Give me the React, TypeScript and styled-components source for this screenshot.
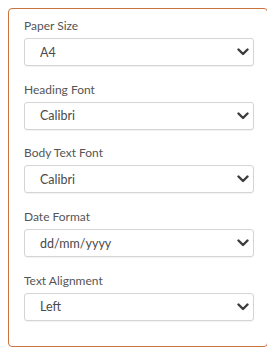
import React from 'react';
import { styled, createGlobalStyle } from 'styled-components';

const GlobalStyle = createGlobalStyle`
  body {
    margin: 8px;
    background: #fff;
    font-family: Lato, 'Open Sans', sans-serif;
  }
`;

interface FieldProps {
  label: string;
  value: string;
}

const fields: FieldProps[] = [
  { label: 'Paper Size', value: 'A4' },
  { label: 'Heading Font', value: 'Calibri' },
  { label: 'Body Text Font', value: 'Calibri' },
  { label: 'Date Format', value: 'dd/mm/yyyy' },
  { label: 'Text Alignment', value: 'Left' },
];

const Chevron = () => (
  <svg width="12" height="8" viewBox="0 0 12 8" aria-hidden="true">
    <path d="M1.5 1.5 L6 6 L10.5 1.5" fill="none" stroke="#3d3d3d" strokeWidth="2.4" strokeLinecap="round" strokeLinejoin="round" />
  </svg>
);

const Field = ({ label, value }: FieldProps) => (
  <Styled.Field>
    <Styled.Label>{label}</Styled.Label>
    <Styled.Select>
      <Styled.Value>{value}</Styled.Value>
      <Chevron />
    </Styled.Select>
  </Styled.Field>
);

export default function App() {
  return (
    <>
      <GlobalStyle />
      <Styled.Panel>
        {fields.map((f) => (
          <Field key={f.label} {...f} />
        ))}
      </Styled.Panel>
    </>
  );
}

const Styled = {
  Panel: styled.div`
    box-sizing: border-box;
    width: 260px;
    height: 339px;
    padding: 9px 13px 0 15px;
    border: 1.5px solid #c9733f;
    border-radius: 4px;
    display: flex;
    flex-direction: column;
    gap: 15.7px;
  `,
  Field: styled.div`
    display: flex;
    flex-direction: column;
    gap: 5px;
  `,
  Label: styled.div`
    font-size: 12px;
    line-height: 15px;
    color: #555;
  `,
  Select: styled.div`
    box-sizing: border-box;
    height: 28px;
    padding: 0 4px 0 15px;
    border: 1px solid #d4d4d4;
    border-radius: 3px;
    box-shadow: 0 1px 1px rgba(0, 0, 0, 0.05);
    display: flex;
    align-items: center;
    justify-content: space-between;
  `,
  Value: styled.span`
    font-size: 12.5px;
    color: #4a4a4a;
  `,
};
